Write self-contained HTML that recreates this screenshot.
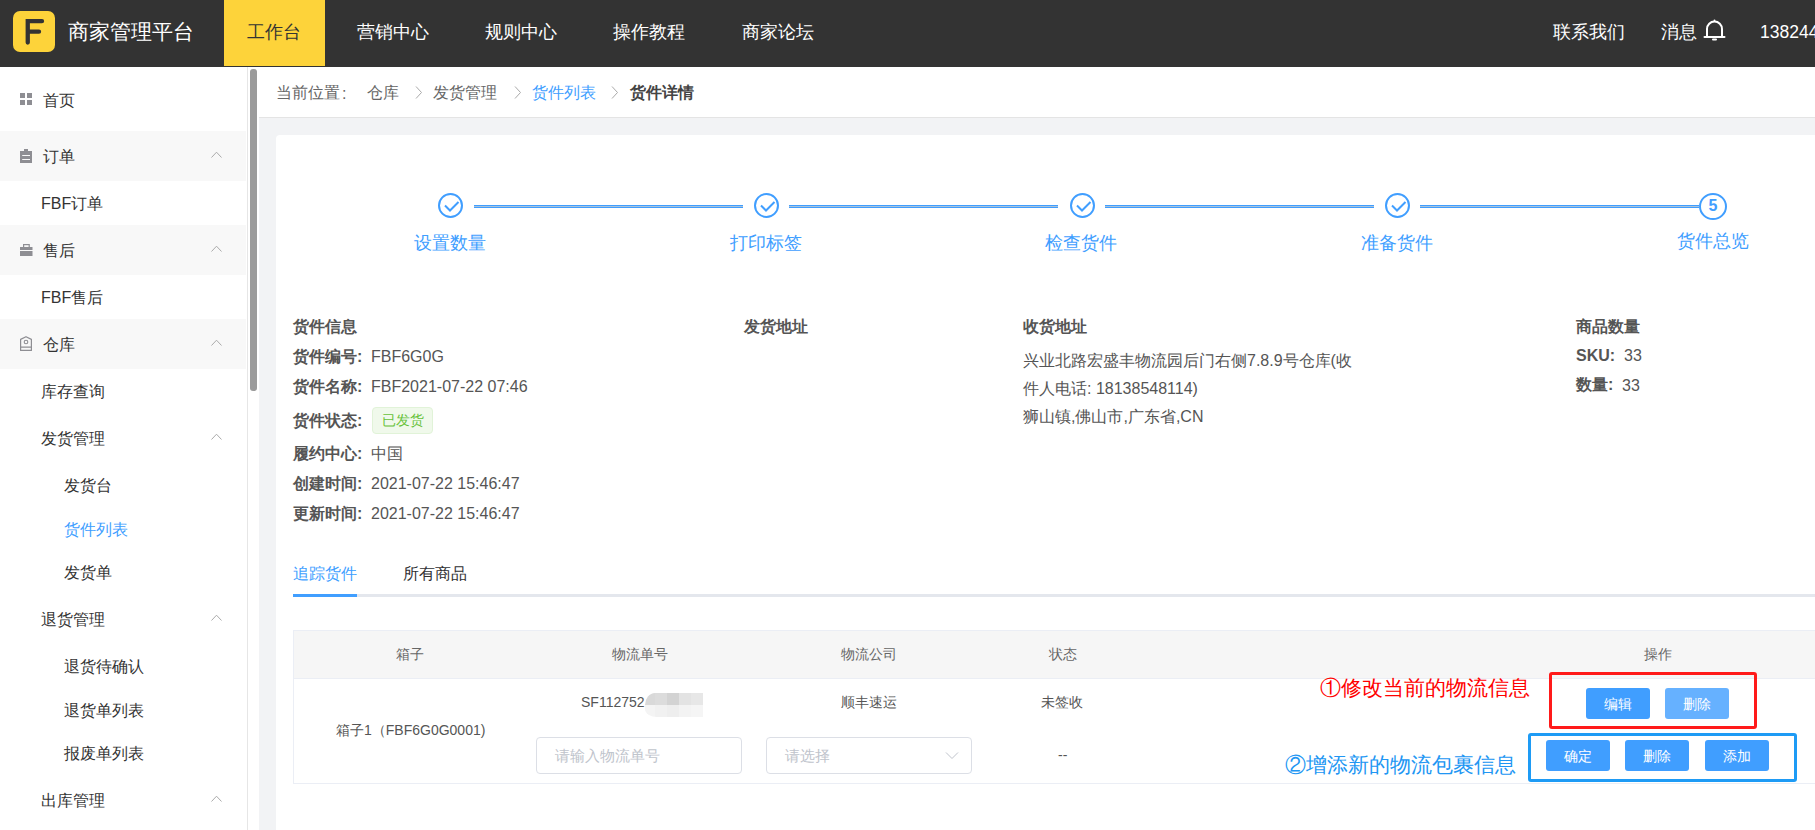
<!DOCTYPE html>
<html><head><meta charset="utf-8">
<style>
*{box-sizing:border-box;margin:0;padding:0}
html,body{width:1815px;height:830px;overflow:hidden;background:#fff;font-family:"Liberation Sans",sans-serif;color:#333}
.a{position:absolute;white-space:nowrap}
#nav{position:absolute;left:0;top:0;width:1815px;height:67px;background:#333}
#logo{position:absolute;left:13px;top:11px;width:42px;height:41px;background:#fdd33a;border-radius:7px}
#logo:after{content:"";position:absolute}
.nt{position:absolute;color:#fff;font-size:18px;line-height:18px;top:23px}
#act{position:absolute;left:224px;top:0;width:101px;height:66px;background:#fdd33a}
#side{position:absolute;left:0;top:67px;width:259px;height:763px;background:#fff}
.sec{position:absolute;left:0;width:246px;height:50px;background:#f8f8f8}
.st{position:absolute;font-size:16px;line-height:16px;color:#333;margin-top:1px}
.chev{position:absolute;left:211px;width:11px;height:7px}
#sline{position:absolute;left:247px;top:67px;width:1px;height:763px;background:#e6e6e6}
#sbar{position:absolute;left:250px;top:69px;width:7px;height:322px;background:#9b9b9b;border-radius:3px}
#main{position:absolute;left:259px;top:67px;width:1556px;height:763px;background:#f2f3f5}
#crumb{position:absolute;left:259px;top:67px;width:1556px;height:51px;background:#fff;border-bottom:1px solid #e4e4e4}
.ct{position:absolute;font-size:16px;line-height:16px;top:85px;color:#666}
#card{position:absolute;left:276px;top:135px;width:1560px;height:720px;background:#fff;border-radius:4px}
.circ{position:absolute;width:25px;height:25px;border:2px solid #409eff;border-radius:50%;top:193px}
.sl{position:absolute;top:205px;height:3px;border-top:1px solid #409eff;border-bottom:1px solid #409eff;background:#a9c3dc}
.stt{position:absolute;font-size:18px;line-height:18px;top:234px;color:#409eff}
.lb{position:absolute;font-size:16px;line-height:16px;font-weight:bold;color:#555}
.vl{position:absolute;font-size:16px;line-height:16px;color:#555}
.th{position:absolute;font-size:14px;line-height:14px;top:647px;color:#666}
.td{position:absolute;font-size:14px;line-height:14px;color:#555}
.btn{position:absolute;width:64px;height:31px;background:#409eff;border-radius:3px;color:#fff;font-size:14px;line-height:33px;text-align:center;font-weight:500}
</style></head><body>
<div id="nav"></div>
<div id="logo"><svg width="42" height="41" style="position:absolute;left:0;top:0"><path d="M14.75 31.5V10.15H29M14.75 20.7H26" fill="none" stroke="#333" stroke-width="4.3" stroke-linecap="round" stroke-linejoin="miter"/></svg></div>
<div class="nt" style="left:68px;top:21px;font-size:21px;line-height:21px">商家管理平台</div>
<div id="act"></div>
<div class="nt" style="left:247px;color:#333">工作台</div>
<div class="nt" style="left:357px">营销中心</div>
<div class="nt" style="left:485px">规则中心</div>
<div class="nt" style="left:613px">操作教程</div>
<div class="nt" style="left:742px">商家论坛</div>
<div class="nt" style="left:1553px;top:23px">联系我们</div>
<div class="nt" style="left:1661px;top:23px">消息</div>
<svg class="a" style="left:1703px;top:19px" width="23" height="23" viewBox="0 0 23 23"><path d="M4 17.5V10a7.5 7.5 0 0 1 15 0v7.5M1.5 18h20M11.5 1.5v1M10 20.5h3" fill="none" stroke="#fff" stroke-width="2" stroke-linecap="round"/></svg>
<div class="nt" style="left:1760px;top:24px;font-size:17.5px;line-height:17.5px">138244</div>

<div id="side"></div>
<div class="sec" style="top:131px"></div>
<div class="sec" style="top:225px"></div>
<div class="sec" style="top:319px"></div>
<div id="sline"></div>
<div id="sbar"></div>

<!-- sidebar icons -->
<svg class="a" style="left:20px;top:93px" width="12" height="12"><rect x="0" y="0" width="5" height="5" fill="#8e8e93"/><rect x="7" y="0" width="5" height="5" fill="#8e8e93"/><rect x="0" y="7" width="5" height="5" fill="#8e8e93"/><rect x="7" y="7" width="5" height="5" fill="#8e8e93"/></svg>
<svg class="a" style="left:20px;top:149px" width="13" height="14"><rect x="4" y="0" width="4" height="2" fill="#8e8e93"/><rect x="0" y="2" width="12" height="12" fill="#8e8e93"/><rect x="2.2" y="6" width="7.8" height="1" fill="#f8f8f8"/><rect x="2.2" y="10" width="7.8" height="1" fill="#f8f8f8"/></svg>
<svg class="a" style="left:20px;top:243px" width="13" height="13"><rect x="3.6" y="1.6" width="5.6" height="3" fill="none" stroke="#8e8e93" stroke-width="1.2"/><rect x="0" y="4" width="12.5" height="3" fill="#8e8e93"/><rect x="0" y="8" width="12.5" height="5" fill="#8e8e93"/></svg>
<svg class="a" style="left:20px;top:336px" width="13" height="15"><path d="M0.6 14.4V3.4L6 0.7l5.4 2.7v11zM0.6 11.2h10.8" fill="none" stroke="#8e8e93" stroke-width="1.2" stroke-linejoin="round"/><circle cx="6" cy="6" r="1.8" fill="none" stroke="#8e8e93" stroke-width="1.1"/></svg>

<div class="st" style="left:43px;top:92px">首页</div>
<div class="st" style="left:43px;top:148px">订单</div>
<div class="st" style="left:41px;top:195px">FBF订单</div>
<div class="st" style="left:43px;top:242px">售后</div>
<div class="st" style="left:41px;top:289px">FBF售后</div>
<div class="st" style="left:43px;top:336px">仓库</div>
<div class="st" style="left:41px;top:383px">库存查询</div>
<div class="st" style="left:41px;top:430px">发货管理</div>
<div class="st" style="left:64px;top:477px">发货台</div>
<div class="st" style="left:64px;top:521px;color:#409eff">货件列表</div>
<div class="st" style="left:64px;top:564px">发货单</div>
<div class="st" style="left:41px;top:611px">退货管理</div>
<div class="st" style="left:64px;top:658px">退货待确认</div>
<div class="st" style="left:64px;top:702px">退货单列表</div>
<div class="st" style="left:64px;top:745px">报废单列表</div>
<div class="st" style="left:41px;top:792px">出库管理</div>
<svg class="chev" style="top:151px" viewBox="0 0 11 7"><path d="M0.5 6.5L5.5 1.2L10.5 6.5" fill="none" stroke="#aaa" stroke-width="1"/></svg>
<svg class="chev" style="top:245px" viewBox="0 0 11 7"><path d="M0.5 6.5L5.5 1.2L10.5 6.5" fill="none" stroke="#aaa" stroke-width="1"/></svg>
<svg class="chev" style="top:339px" viewBox="0 0 11 7"><path d="M0.5 6.5L5.5 1.2L10.5 6.5" fill="none" stroke="#aaa" stroke-width="1"/></svg>
<svg class="chev" style="top:433px" viewBox="0 0 11 7"><path d="M0.5 6.5L5.5 1.2L10.5 6.5" fill="none" stroke="#aaa" stroke-width="1"/></svg>
<svg class="chev" style="top:614px" viewBox="0 0 11 7"><path d="M0.5 6.5L5.5 1.2L10.5 6.5" fill="none" stroke="#aaa" stroke-width="1"/></svg>
<svg class="chev" style="top:795px" viewBox="0 0 11 7"><path d="M0.5 6.5L5.5 1.2L10.5 6.5" fill="none" stroke="#aaa" stroke-width="1"/></svg>

<div id="main"></div>
<div id="crumb"></div>
<div class="ct" style="left:276px">当前位置</div><div class="ct" style="left:342px;top:86px">:</div>
<div class="ct" style="left:367px">仓库</div>
<svg class="a" style="left:415px;top:85px" width="8" height="15"><path d="M1 1.5L6.5 7.5L1 13.5" fill="none" stroke="#aaa" stroke-width="1"/></svg>
<div class="ct" style="left:433px">发货管理</div>
<svg class="a" style="left:514px;top:85px" width="8" height="15"><path d="M1 1.5L6.5 7.5L1 13.5" fill="none" stroke="#aaa" stroke-width="1"/></svg>
<div class="ct" style="left:532px;color:#409eff">货件列表</div>
<svg class="a" style="left:611px;top:85px" width="8" height="15"><path d="M1 1.5L6.5 7.5L1 13.5" fill="none" stroke="#aaa" stroke-width="1"/></svg>
<div class="ct" style="left:630px;font-weight:bold;color:#444">货件详情</div>

<div id="card"></div>
<!-- steps -->
<div class="circ" style="left:438px"></div>
<div class="circ" style="left:754px"></div>
<div class="circ" style="left:1070px"></div>
<div class="circ" style="left:1385px"></div>
<svg class="a" style="left:438px;top:193px" width="25" height="25"><path d="M7 12.5l5 5l8.5-8.5" fill="none" stroke="#409eff" stroke-width="2"/></svg>
<svg class="a" style="left:754px;top:193px" width="25" height="25"><path d="M7 12.5l5 5l8.5-8.5" fill="none" stroke="#409eff" stroke-width="2"/></svg>
<svg class="a" style="left:1070px;top:193px" width="25" height="25"><path d="M7 12.5l5 5l8.5-8.5" fill="none" stroke="#409eff" stroke-width="2"/></svg>
<svg class="a" style="left:1385px;top:193px" width="25" height="25"><path d="M7 12.5l5 5l8.5-8.5" fill="none" stroke="#409eff" stroke-width="2"/></svg>
<div class="a" style="left:1699px;top:193px;width:28px;height:27px;border:2.5px solid #409eff;border-radius:50%;color:#409eff;font-weight:bold;font-size:16px;line-height:22px;text-align:center">5</div>
<div class="sl" style="left:474px;width:269px"></div>
<div class="sl" style="left:789px;width:269px"></div>
<div class="sl" style="left:1105px;width:269px"></div>
<div class="sl" style="left:1420px;width:279px"></div>
<div class="stt" style="left:414px">设置数量</div>
<div class="stt" style="left:730px">打印标签</div>
<div class="stt" style="left:1045px">检查货件</div>
<div class="stt" style="left:1361px">准备货件</div>
<div class="stt" style="left:1677px;top:232px">货件总览</div>

<!-- info -->
<div class="lb" style="left:293px;top:319px">货件信息</div>
<div class="lb" style="left:293px;top:349px">货件编号:</div><div class="vl" style="left:371px;top:349px">FBF6G0G</div>
<div class="lb" style="left:293px;top:379px">货件名称:</div><div class="vl" style="left:371px;top:379px">FBF2021-07-22 07:46</div>
<div class="lb" style="left:293px;top:413px">货件状态:</div>
<div class="a" style="left:372px;top:407px;width:61px;height:27px;background:#f0f9eb;border:1px solid #e1f3d8;border-radius:4px;color:#67c23a;font-size:14px;line-height:25px;text-align:center">已发货</div>
<div class="lb" style="left:293px;top:446px">履约中心:</div><div class="vl" style="left:371px;top:446px">中国</div>
<div class="lb" style="left:293px;top:476px">创建时间:</div><div class="vl" style="left:371px;top:476px">2021-07-22 15:46:47</div>
<div class="lb" style="left:293px;top:506px">更新时间:</div><div class="vl" style="left:371px;top:506px">2021-07-22 15:46:47</div>

<div class="lb" style="left:744px;top:319px">发货地址</div>
<div class="lb" style="left:1023px;top:319px">收货地址</div>
<div class="vl" style="left:1023px;top:353px">兴业北路宏盛丰物流园后门右侧7.8.9号仓库(收</div>
<div class="vl" style="left:1023px;top:381px">件人电话: 18138548114)</div>
<div class="vl" style="left:1023px;top:409px">狮山镇,佛山市,广东省,CN</div>

<div class="lb" style="left:1576px;top:319px">商品数量</div>
<div class="lb" style="left:1576px;top:348px">SKU:</div><div class="vl" style="left:1624px;top:348px">33</div>
<div class="lb" style="left:1576px;top:377px">数量:</div><div class="vl" style="left:1622px;top:378px">33</div>

<!-- tabs -->
<div class="a" style="left:293px;top:566px;font-size:16px;line-height:16px;color:#409eff">追踪货件</div>
<div class="a" style="left:403px;top:566px;font-size:16px;line-height:16px;color:#303133">所有商品</div>
<div class="a" style="left:293px;top:594px;width:1522px;height:3px;background:#e4e7ed"></div>
<div class="a" style="left:293px;top:594px;width:64px;height:3px;background:#409eff"></div>

<!-- table -->
<div class="a" style="left:293px;top:630px;width:1530px;height:154px;border:1px solid #ebeef5;background:#fff"></div>
<div class="a" style="left:294px;top:631px;width:1530px;height:48px;background:#f6f6f6;border-bottom:1px solid #ebeef5"></div>
<div class="th" style="left:396px">箱子</div>
<div class="th" style="left:612px">物流单号</div>
<div class="th" style="left:841px">物流公司</div>
<div class="th" style="left:1049px">状态</div>
<div class="th" style="left:1644px">操作</div>

<div class="td" style="left:336px;top:723px">箱子1（FBF6G0G0001)</div>
<div class="td" style="left:581px;top:695px">SF112752</div>
<div class="a" style="left:645px;top:693px;width:58px;height:24px;overflow:hidden;border-radius:10px 0 0 12px/12px 0 0 8px">
<div class="a" style="left:0;top:0;width:10px;height:12px;background:#d9d9d9"></div><div class="a" style="left:10px;top:0;width:12px;height:12px;background:#dcdcdc"></div><div class="a" style="left:22px;top:0;width:12px;height:12px;background:#d3d3d3"></div><div class="a" style="left:34px;top:0;width:12px;height:12px;background:#e3e3e3"></div><div class="a" style="left:46px;top:0;width:12px;height:12px;background:#e7e7e7"></div>
<div class="a" style="left:0;top:12px;width:10px;height:12px;background:#f4f4f4"></div><div class="a" style="left:10px;top:12px;width:12px;height:12px;background:#f1f1f1"></div><div class="a" style="left:22px;top:12px;width:12px;height:12px;background:#eeeeee"></div><div class="a" style="left:34px;top:12px;width:12px;height:12px;background:#f3f3f3"></div><div class="a" style="left:46px;top:12px;width:12px;height:12px;background:#f5f5f5"></div>
</div>
<div class="td" style="left:841px;top:695px">顺丰速运</div>
<div class="td" style="left:1041px;top:695px">未签收</div>
<div class="td" style="left:1058px;top:748px">--</div>
<div class="a" style="left:536px;top:737px;width:206px;height:37px;border:1px solid #dcdfe6;border-radius:4px"></div>
<div class="a" style="left:555px;top:748px;font-size:15px;line-height:15px;color:#c0c4cc">请输入物流单号</div>
<div class="a" style="left:766px;top:737px;width:206px;height:37px;border:1px solid #dcdfe6;border-radius:4px"></div>
<div class="a" style="left:785px;top:748px;font-size:15px;line-height:15px;color:#c0c4cc">请选择</div>
<svg class="a" style="left:945px;top:751px" width="14" height="9"><path d="M1 1.5l6 6l6-6" fill="none" stroke="#c0c4cc" stroke-width="1"/></svg>

<div class="a" style="left:1320px;top:677px;font-size:21px;line-height:21px;color:#f00">①修改当前的物流信息</div>
<div class="a" style="left:1285px;top:754px;font-size:21px;line-height:21px;color:#2196f3">②增添新的物流包裹信息</div>
<div class="a" style="left:1549px;top:672px;width:208px;height:57px;border:3px solid #ff1a1a;border-radius:3px"></div>
<div class="a" style="left:1528px;top:733px;width:269px;height:49px;border:3px solid #1e9bf5;border-radius:3px"></div>
<div class="btn" style="left:1586px;top:688px">编辑</div>
<div class="btn" style="left:1665px;top:688px;background:#66b1ff">删除</div>
<div class="btn" style="left:1546px;top:740px">确定</div>
<div class="btn" style="left:1625px;top:740px">删除</div>
<div class="btn" style="left:1705px;top:740px">添加</div>
</body></html>
